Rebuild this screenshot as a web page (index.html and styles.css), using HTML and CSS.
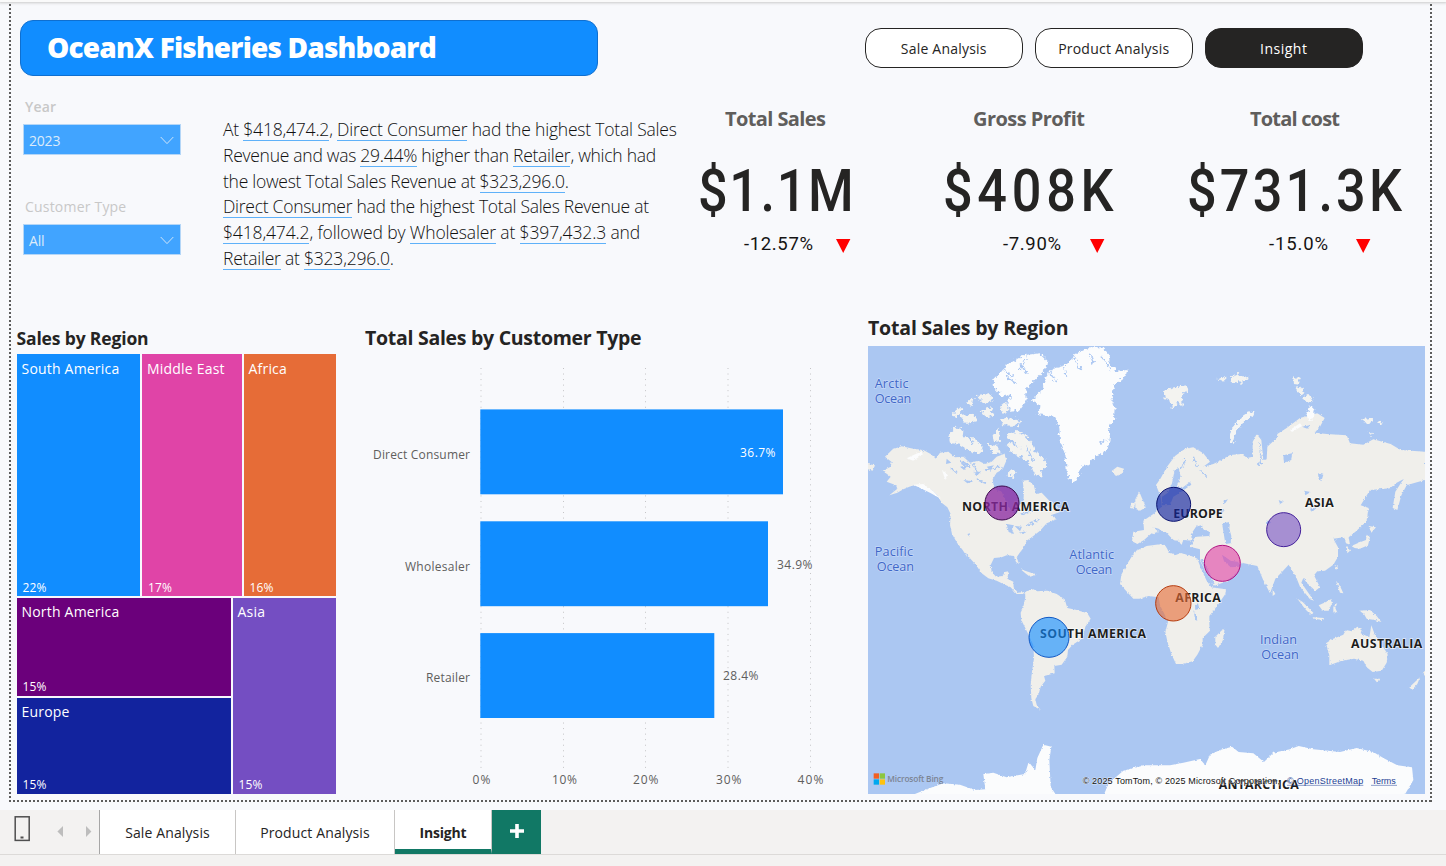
FILE: index.html
```html
<!DOCTYPE html>
<html lang="en">
<head>
<meta charset="utf-8">
<title>OceanX Fisheries Dashboard</title>
<link rel="stylesheet" href="styles.css">
</head>
<body>
<div class="app">
  <div class="ribbon-edge"></div>
  <main class="canvas">
    <header class="header">
      <h1 class="title">OceanX Fisheries Dashboard</h1>
      <nav class="pills">
        <a class="pill">Sale Analysis</a>
        <a class="pill">Product Analysis</a>
        <a class="pill pill-active">Insight</a>
      </nav>
    </header>

    <section class="summary">
      <div class="filters">
        <div class="filter">
          <div class="filter-label filter-label-strong">Year</div>
          <div class="select"><span>2023</span><svg width="14" height="9" viewBox="0 0 14 9"><path d="M.7 1 7 7.6 13.3 1" fill="none" stroke="#cfe4f8" stroke-width="1"/></svg></div>
        </div>
        <div class="filter">
          <div class="filter-label">Customer Type</div>
          <div class="select"><span>All</span><svg width="14" height="9" viewBox="0 0 14 9"><path d="M.7 1 7 7.6 13.3 1" fill="none" stroke="#cfe4f8" stroke-width="1"/></svg></div>
        </div>
      </div>
      <div class="narrative">
        <div class="l1">At <u>$418,474.2</u>, <u>Direct Consumer</u> had the highest Total Sales</div>
        <div class="l2">Revenue and was <u>29.44%</u> higher than <u>Retailer</u>, which had</div>
        <div class="l3">the lowest Total Sales Revenue at <u>$323,296.0</u>.</div>
        <div class="l4"><u>Direct Consumer</u> had the highest Total Sales Revenue at</div>
        <div class="l5"><u>$418,474.2</u>, followed by <u>Wholesaler</u> at <u>$397,432.3</u> and</div>
        <div class="l6"><u>Retailer</u> at <u>$323,296.0</u>.</div>
      </div>
      <svg class="kpis" width="740" height="170" viewBox="690 100 740 170">
        <g class="kpi-name">
          <text x="725" y="126" textLength="101">Total Sales</text>
          <text x="973" y="126" textLength="112">Gross Profit</text>
          <text x="1250" y="126" textLength="90">Total cost</text>
        </g>
        <g class="kpi-value">
          <text transform="translate(698 211) scale(.87 1)" textLength="179">$1.1M</text>
          <text transform="translate(943 211) scale(.87 1)" textLength="196">$408K</text>
          <text transform="translate(1187 211) scale(.87 1)" textLength="247">$731.3K</text>
        </g>
        <g class="kpi-delta">
          <text x="744" y="250" textLength="69">-12.57%</text>
          <text x="1003" y="250" textLength="58">-7.90%</text>
          <text x="1269" y="250" textLength="59">-15.0%</text>
        </g>
        <path d="M836 239h14.400l-7.200 14zM1090 239h14.400l-7.200 14zM1356 239h14.400l-7.200 14z" fill="#f00"/>
      </svg>
    </section>

    <section class="visuals">
      <div class="visual visual-tree">
        <h2 class="h-tree">Sales by Region</h2>
        <div class="treemap">
          <div class="tree-row tree-top">
            <div class="tile south"><span>South America</span><b>22%</b></div>
            <div class="tile middle"><span>Middle East</span><b>17%</b></div>
            <div class="tile africa"><span>Africa</span><b>16%</b></div>
          </div>
          <div class="tree-row tree-bottom">
            <div class="tree-col">
              <div class="tile north"><span>North America</span><b>15%</b></div>
              <div class="tile europe"><span>Europe</span><b>15%</b></div>
            </div>
            <div class="tile asia"><span>Asia</span><b>15%</b></div>
          </div>
        </div>
      </div>

      <div class="visual visual-bars">
        <h2 class="h-bars">Total Sales by Customer Type</h2>
        <svg class="bars" width="490" height="440" viewBox="350 354 490 440">
          <g stroke="#c4c4c6" stroke-width="1" stroke-dasharray="1 4.540">
            <path d="M481 368V770M563.500 368V770M645.500 368V770M728 368V770M810.500 368V770"/>
          </g>
          <g fill="#118dff">
            <rect x="480.300" y="409.400" width="302.700" height="84.900"/>
            <rect x="480.300" y="521.300" width="287.700" height="84.900"/>
            <rect x="480.300" y="633.100" width="234" height="84.900"/>
          </g>
          <g class="axis">
            <text x="373" y="459" textLength="97">Direct Consumer</text>
            <text x="405" y="571" textLength="65">Wholesaler</text>
            <text x="426" y="682" textLength="44">Retailer</text>
            <text x="740" y="457" textLength="35.500" class="inside">36.7%</text>
            <text x="777" y="569" textLength="35.500">34.9%</text>
            <text x="723" y="680" textLength="35.500">28.4%</text>
            <text x="472.500" y="784" textLength="18">0%</text>
            <text x="552" y="784" textLength="25">10%</text>
            <text x="633" y="784" textLength="25.500">20%</text>
            <text x="716" y="784" textLength="25.500">30%</text>
            <text x="797.500" y="784" textLength="26">40%</text>
          </g>
        </svg>
      </div>

      <div class="visual visual-map">
        <h2 class="h-map">Total Sales by Region</h2>
        <svg class="map" width="557" height="448" viewBox="24 108 1671 1344">
          <defs>
            <filter id="coast" x="-2%" y="-2%" width="104%" height="104%">
              <feTurbulence type="fractalNoise" baseFrequency="0.16" numOctaves="2" seed="4"/>
              <feDisplacementMap in="SourceGraphic" scale="8" xChannelSelector="R" yChannelSelector="G"/>
              <feGaussianBlur stdDeviation="1.1"/>
            </filter>
            <filter id="arctic" x="-2%" y="-2%" width="104%" height="104%">
              <feTurbulence type="fractalNoise" baseFrequency="0.1" numOctaves="2" seed="9"/>
              <feDisplacementMap in="SourceGraphic" scale="20" xChannelSelector="R" yChannelSelector="G"/>
              <feGaussianBlur stdDeviation="1.3"/>
            </filter>
          </defs>
          <rect x="24" y="108" width="1671" height="1344" fill="#abc7f2"/>

          <g fill="#f0efeb" filter="url(#coast)">
            <!-- North and Central America -->
            <path d="M75 440 98 418 125 409 160 416 190 420 212 432 228 446 240 428 265 425 285 442 310 440 330 458 355 452 375 462 395 455 410 440 432 432 440 450 428 478 410 488 398 508 402 535 425 545 440 580 455 605 470 612 476 592 490 575 492 545 488 512 505 510 522 528 528 552 545 548 568 572 592 590 600 606 572 616 590 628 560 640 540 662 520 678 500 692 492 712 478 730 470 742 477 762 468 756 462 738 440 736 425 742 402 744 392 765 395 785 408 800 428 798 434 786 446 784 442 806 460 815 461 832 474 848 498 845 492 852 470 852 452 832 430 822 410 812 385 805 365 790 348 765 330 745 318 728 322 742 308 720 292 700 276 672 270 645 272 612 262 592 245 578 232 556 215 540 195 535 165 525 148 530 130 538 112 548 88 556 112 536 108 526 80 515 92 500 68 482 92 470 95 456Z"/>
            <path d="M24 462 45 466 38 482 24 478Z"/>
            <!-- South America -->
            <path d="M495 845 520 838 532 844 562 842 590 852 614 868 622 894 650 900 682 910 692 926 676 950 668 985 638 1004 624 1020 622 1040 605 1064 583 1068 584 1090 552 1098 556 1112 542 1130 536 1152 526 1168 530 1184 542 1200 520 1188 514 1165 512 1125 516 1085 522 1045 520 1005 506 975 484 930 482 908 490 890 496 862Z"/>
            <!-- Africa -->
            <path d="M825 724 860 708 905 702 922 706 924 722 945 736 965 728 1000 740 1012 746 1024 778 1040 812 1054 832 1098 838 1096 852 1074 884 1048 918 1048 942 1050 962 1028 984 1028 1004 1012 1034 998 1054 966 1062 948 1062 934 1032 922 994 916 966 924 936 912 910 900 886 896 862 866 858 838 866 820 866 796 840 780 822 784 794 800 764Z"/>
            <path d="M1066 980 1084 962 1094 956 1088 992 1074 1014 1066 1004Z"/>
            <!-- Europe and Asia -->
            <path d="M888 525 902 505 920 472 945 438 975 416 1000 412 1030 430 1050 455 1030 470 1060 462 1080 452 1110 435 1145 432 1162 444 1178 440 1178 396 1190 372 1204 390 1210 450 1220 448 1222 410 1250 384 1252 372 1280 354 1320 324 1350 316 1372 310 1394 324 1380 350 1364 368 1400 372 1460 376 1470 400 1510 404 1540 388 1592 402 1622 420 1695 425 1695 510 1660 520 1640 526 1624 556 1612 600 1598 594 1606 545 1630 508 1610 518 1590 535 1530 540 1502 586 1526 594 1520 634 1488 664 1466 682 1470 704 1458 700 1452 682 1420 686 1434 712 1434 740 1420 764 1395 782 1372 784 1362 796 1380 832 1366 842 1340 818 1330 804 1324 818 1350 856 1362 872 1350 868 1320 830 1308 800 1286 764 1268 784 1246 806 1230 850 1208 806 1192 768 1145 758 1132 786 1100 814 1062 828 1040 790 1020 752 1020 718 990 710 1002 692 970 690 965 704 940 690 915 664 900 664 930 690 920 700 895 680 875 670 852 690 832 702 816 694 820 665 852 660 850 632 880 612 905 590 902 560Z"/>
            <!-- Australia and islands -->
            <path d="M1398 1000 1416 988 1450 974 1458 960 1475 964 1492 950 1506 956 1502 970 1528 982 1534 946 1545 975 1562 1000 1583 1032 1580 1058 1565 1082 1538 1086 1520 1072 1510 1052 1482 1046 1445 1052 1408 1066 1408 1036Z"/>
            <path d="M1542 1106 1558 1106 1552 1118ZM1648 1132 1680 1102 1672 1122 1656 1140ZM1688 1090 1695 1082V1098ZM1312 866 1328 876 1360 908 1354 916 1336 898ZM1376 886 1398 876 1412 868 1416 880 1406 902 1388 902ZM1358 922 1392 924 1390 930 1360 926ZM1498 902 1530 900 1550 918 1564 936 1544 930 1520 926 1512 912ZM1420 890 1432 878 1426 894 1432 908 1420 906ZM1428 812 1440 828 1450 850 1440 848ZM1238 838 1246 852 1238 858ZM1460 706 1470 722 1462 730ZM1474 708 1496 698 1518 690 1520 674 1530 682 1524 706 1500 716 1484 714ZM1526 648 1548 652 1534 668ZM1424 765 1434 770 1428 780Z"/>
            <path d="M754 484 772 470 792 476 788 490 768 498ZM826 568 838 545 846 565 858 592 840 602 826 596ZM814 578 826 580 820 596 810 594ZM482 778 504 785 530 794 510 800 496 790Z"/>
          </g>

          <!-- Arctic archipelago -->
          <g fill="#f3f3f0" filter="url(#arctic)">
            <path d="M265 376 290 350 310 362 308 382 340 382 368 410 362 432 330 424 300 404 270 398ZM275 312 300 290 310 300 290 322ZM300 318 340 314 356 332 320 342ZM318 276 340 264 334 292ZM352 258 390 252 398 268 374 282ZM362 300 392 292 402 314 378 324ZM420 328 450 322 480 334 474 348 430 346ZM398 376 416 356 420 392 402 398ZM386 402 410 404 422 430 398 434ZM440 372 470 362 498 378 516 402 530 430 558 454 562 472 540 480 545 500 524 492 510 462 484 440 462 434 440 408 455 392ZM420 290 438 276 446 302 428 312ZM448 480 468 482 462 504 446 500Z"/>
            <path d="M912 240 945 232 980 226 988 240 966 252 968 290 954 276 936 300 932 274 914 264ZM1072 208 1100 200 1092 216ZM1110 202 1130 192 1166 204 1150 218 1116 216ZM1300 198 1318 206 1318 224 1302 222ZM1304 230 1320 228 1334 246 1322 256ZM1330 262 1350 252 1358 272 1338 276ZM1506 326 1542 324 1534 342 1514 340ZM1554 334 1570 338 1558 344ZM1524 362 1540 368 1532 378Z"/>
          </g>
          <path d="M1112 400 1120 364 1148 328 1182 306" fill="none" stroke="#f4f5f4" stroke-width="14" filter="url(#arctic)"/>

          <!-- Ice sheets -->
          <g fill="#fbfcfd" filter="url(#arctic)">
            <path d="M515 270 545 244 558 202 576 178 622 164 640 136 690 112 726 112 750 140 746 158 770 186 802 180 796 200 764 224 754 264 764 294 762 330 744 352 750 380 742 422 706 436 688 462 662 472 652 510 636 518 620 482 616 430 600 392 598 350 582 320 530 312 545 290Z"/>
            <path d="M400 210 420 190 440 166 490 136 540 130 566 156 548 186 520 214 498 240 500 272 480 300 450 302 442 278 456 252 426 260 404 236Z"/>
            <path d="M1340 310 1350 286 1364 300 1362 328 1344 332Z"/>
          </g>
          <g fill="#fbfcfd" filter="url(#coast)">
            <path d="M150 1458 200 1438 250 1420 300 1424 345 1440 376 1438 370 1392 400 1388 440 1402 495 1392 506 1356 526 1380 532 1344 550 1304 574 1310 568 1350 572 1430 590 1458Z"/>
            <path d="M730 1458 746 1420 790 1382 850 1366 930 1366 970 1358 1020 1347 1036 1366 1050 1334 1080 1320 1116 1310 1136 1326 1180 1330 1212 1356 1240 1328 1290 1318 1316 1308 1360 1318 1440 1326 1490 1314 1540 1326 1570 1344 1612 1366 1656 1372 1660 1410 1632 1458Z"/>
            <path d="M140 445 180 426 190 432 160 452ZM160 524 190 522 220 544 242 566 210 548ZM246 480 262 492 256 510Z"/>
            <path d="M1290 360 1320 340 1326 348 1296 366Z"/>
          </g>
          <path d="M640 140 662 180M690 130 700 160M726 140 752 180M610 170 620 200M570 190 590 216M736 390 718 400M430 180 460 200M480 160 500 190" stroke="#abc7f2" stroke-width="4" fill="none" filter="url(#arctic)"/>

          <!-- Inland waters -->
          <g fill="#abc7f2" filter="url(#coast)">
            <path d="M944 480 956 474 962 500 950 530 966 534 990 516 994 524 960 548 940 560 930 585 905 586 906 560 924 548 936 520Z"/>
            <path d="M960 700 1000 692 992 674 1008 650 1028 644 1026 656 1050 666 1048 678 1010 680 992 692ZM1086 640 1110 636 1108 656 1114 678 1112 700 1096 702 1092 676Z"/>
            <path d="M860 696 884 668 914 664 932 690 956 692 970 714 1008 716 1004 740 960 728 930 730 914 704ZM880 652 896 656 920 674 944 692 936 702 908 676Z"/>
            <path d="M440 642 462 646 456 656 462 672 446 666ZM464 648 486 650 480 664ZM476 668 500 664 490 672ZM380 470 402 466 390 480ZM340 488 364 484 350 498ZM300 470 324 466 312 480ZM322 672 330 670 328 680ZM260 446 274 458 258 462ZM310 510 340 514 322 520Z"/>
            <path d="M1270 436 1296 430 1294 450 1272 458ZM1374 490 1390 494 1384 514 1376 506ZM1332 542 1352 546 1336 556ZM1090 572 1104 568 1094 582ZM1080 602 1094 600 1086 610ZM1256 570 1270 576 1260 582ZM1220 630 1234 636 1222 644ZM1326 350 1350 346 1342 356ZM1350 596 1372 592 1356 606ZM1190 462 1200 454 1196 468Z"/>
            <path d="M1018 745 1030 750 1064 822 1056 820ZM1086 734 1112 752 1138 756 1140 770 1112 772 1092 754ZM1005 886 1014 880 1018 896 1006 900ZM1000 900 1006 930 1012 932 1006 910Z"/>
          </g>
          <g stroke="#abc7f2" stroke-width="5" fill="none" filter="url(#arctic)">
            <path d="M300 452 330 470M340 460 350 490M372 480 420 470M350 510 378 520M400 512 436 506M270 470 292 490M410 540 440 524M480 614 520 600M500 646 540 630M975 450 964 478M1000 440 1010 470M1020 480 1040 500M1200 400 1204 460M320 370 340 400M450 390 480 416M500 410 520 450M500 140 480 180M438 200 470 220"/>
          </g>

          <g class="continent">
            <text x="306" y="602" textLength="322">NORTH AMERICA</text>
            <text x="940" y="624" textLength="148">EUROPE</text>
            <text x="1335" y="590" textLength="86">ASIA</text>
            <text x="946" y="877" textLength="136">AFRICA</text>
            <text x="540" y="984" textLength="318">SOUTH AMERICA</text>
            <text x="1473" y="1013" textLength="214">AUSTRALIA</text>
            <text x="1076" y="1438" textLength="240">ANTARCTICA</text>
          </g>
          <g class="ocean">
            <text x="44" y="235" textLength="102">Arctic</text>
            <text x="44" y="280" textLength="110">Ocean</text>
            <text x="44" y="738" textLength="115">Pacific</text>
            <text x="50" y="782" textLength="112">Ocean</text>
            <text x="628" y="747" textLength="134">Atlantic</text>
            <text x="647" y="792" textLength="110">Ocean</text>
            <text x="1200" y="1003" textLength="111">Indian</text>
            <text x="1204" y="1048" textLength="112">Ocean</text>
          </g>
          <g stroke-width="3">
            <circle cx="426" cy="579" r="51" fill="#8a27a1" fill-opacity=".76" stroke="#3c0a4d"/>
            <circle cx="941" cy="583" r="51" fill="#12239e" fill-opacity=".65" stroke="#0b1470"/>
            <circle cx="1271" cy="659" r="51" fill="#744ec2" fill-opacity=".6" stroke="#44219b"/>
            <circle cx="1087" cy="760" r="54" fill="#e044a7" fill-opacity=".62" stroke="#b01482"/>
            <circle cx="940" cy="880" r="53" fill="#e66c37" fill-opacity=".62" stroke="#b53a0d"/>
            <circle cx="567" cy="982" r="60" fill="#118dff" fill-opacity=".62" stroke="#1259c4"/>
          </g>
          <path d="M41 1390h16v16H41z" fill="#f25f22"/><path d="M59 1390h16v16H59z" fill="#8cc63f"/><path d="M41 1408h16v16H41z" fill="#00a8f0"/><path d="M59 1408h16v16H59z" fill="#ffc20e"/>
          <text class="bing" x="82" y="1416" textLength="168">Microsoft Bing</text>
          <g class="credit">
            <text x="668" y="1421" textLength="592">© 2025 TomTom, © 2025 Microsoft Corporation,</text>
            <text class="link" x="1281" y="1421" textLength="229">© OpenStreetMap</text>
            <text class="link" x="1535" y="1421" textLength="72">Terms</text>
            <path d="M1281 1426H1510M1533 1426H1611" stroke="#1c3f94" stroke-width="2.500"/>
          </g>
        </svg>
      </div>
    </section>
  </main>

  <footer class="tabbar">
    <div class="tab-tools">
      <svg width="100" height="44" viewBox="0 0 100 44">
        <rect x="15.200" y="6.800" width="14" height="23.600" fill="none" stroke="#4f4f4f" stroke-width="1.500"/>
        <path d="M20.500 26.500h3v2h-3z" fill="#4f4f4f"/>
        <path d="M63 16v11l-5.600-5.500z" fill="#bdbdbd"/><path d="M86 16v11l5.400-5.500z" fill="#bdbdbd"/>
      </svg>
    </div>
    <div class="tab tab-1">Sale Analysis</div>
    <div class="tab tab-2">Product Analysis</div>
    <div class="tab tab-3">Insight</div>
    <div class="tab-add"><svg width="14" height="14" viewBox="0 0 14 14"><path d="M7 0v14M0 7h14" stroke="#fff" stroke-width="3.600"/></svg></div>
  </footer>
  <div class="status"></div>
</div>
</body>
</html>
```
FILE: styles.css
```css
* { box-sizing: border-box; }
body { margin: 0; width: 1446px; height: 866px; overflow: hidden; background: #f8f9fc; color: #252423; font-family: "Open Sans", "Noto Sans", sans-serif; }
h1, h2 { margin: 0; }
.app { display: flex; flex-direction: column; height: 866px; }
.ribbon-edge { height: 2px; flex: none; background: #fafafa; box-shadow: 0 0 3px 1px #c9c9c9; }

.canvas {
  height: 800px; margin: 0 14px 8px 9px; padding: 0 2px; flex: none;
  background:
    repeating-linear-gradient(#5c5c5c 0 2px, transparent 2px 4px) 0 2px / 2px 798px no-repeat,
    repeating-linear-gradient(#5c5c5c 0 2px, transparent 2px 4px) 100% 2px / 2px 798px no-repeat,
    repeating-linear-gradient(90deg, #5c5c5c 0 2px, transparent 2px 4px) 0 100% / 100% 2px no-repeat;
}

.header { display: flex; justify-content: space-between; height: 74px; padding: 18px 67px 0 9px; }
.title { width: 578px; height: 56px; padding-left: 26px; border: 1px solid #0f6fd0; border-radius: 13px; background: #118dff; color: #fff; font-size: 28px; font-weight: 800; line-height: 52px; letter-spacing: -.82px; white-space: nowrap; }
.pills { display: flex; gap: 11.500px; padding-top: 8px; }
.pill { width: 158.500px; height: 40px; border: 1px solid #252423; border-radius: 16px; background: #fff; font-size: 14px; line-height: 39px; text-align: center; letter-spacing: .22px; }
.pill-active { background: #252423; color: #fff; letter-spacing: .5px; }

.summary { display: flex; height: 251px; }
.filters { width: 212px; padding: 20px 0 0 12px; }
.filter { height: 100px; }
.filter-label { padding-left: 2px; height: 28px; color: #c8c8c8; font-size: 14px; line-height: 21px; letter-spacing: .2px; }
.filter-label-strong { font-weight: 600; }
.select { display: flex; align-items: center; justify-content: space-between; width: 158px; height: 31px; padding: 1px 6px 0 5px; border: 1px solid #b4d6f7; background: #41a4ff; color: #dcebfa; font-size: 14px; letter-spacing: -.2px; }
.narrative { width: 467px; padding-top: 41px; color: #111; font-size: 17.500px; font-weight: 300; line-height: 25.800px; white-space: nowrap; }
.narrative u { display: inline-block; height: 24px; line-height: 25.800px; vertical-align: top; text-decoration: none; border-bottom: 1.500px solid #5fb1f9; }
.l1 { letter-spacing: -.2px; }
.l2, .l3, .l4 { letter-spacing: -.27px; }
.l5 { letter-spacing: -.14px; }
.l6 { letter-spacing: -.22px; }
.kpis { margin-top: 24px; flex: none; }
.kpi-name { font-size: 20px; font-weight: 700; fill: #605e5c; }
.kpi-value { font-family: Roboto, sans-serif; font-size: 60px; font-weight: 500; fill: #252423; }
.kpi-delta { font-family: Roboto, sans-serif; font-size: 18.500px; fill: #151413; }

.visuals { display: flex; height: 473px; }
h2 { font-weight: 700; white-space: nowrap; }
.visual-tree { width: 339px; padding-left: 5.500px; }
.h-tree { height: 27px; line-height: 22px; font-size: 17.500px; letter-spacing: -.15px; }
.treemap { width: 319.500px; height: 441px; display: flex; flex-direction: column; gap: 2px; }
.tree-row { display: flex; gap: 2px; }
.tree-top { height: 242px; }
.tree-bottom { height: 196px; }
.tree-col { display: flex; flex-direction: column; gap: 2px; width: 214px; }
.tile { display: flex; flex-direction: column; justify-content: space-between; padding: 4px 5px 1px; color: #fff; font-size: 14px; line-height: 21px; letter-spacing: .2px; }
.tree-top .tile { padding-bottom: 0; }
.tree-bottom .tile { padding-top: 3px; }
.tile b { padding-left: 1px; font-size: 12px; font-weight: 400; line-height: 16px; }
.south { width: 123.500px; background: #118dff; }
.middle { width: 99.500px; background: #e044a7; }
.africa { width: 92.500px; background: #e66c37; }
.north { height: 97.500px; background: #6b007b; }
.europe { height: 96.500px; background: #12239e; }
.asia { width: 103.500px; background: #744ec2; }

.visual-bars { width: 518px; }
.h-bars { height: 27px; padding-left: 15px; line-height: 21px; font-size: 19.500px; letter-spacing: -.28px; }
.bars { display: block; }
.axis { font-size: 12px; fill: #605e5c; }
.inside { fill: #fff; }
.visual-map { width: 557px; }
.h-map { height: 19px; line-height: 1px; font-size: 19.500px; letter-spacing: -.18px; }
.map { display: block; }
.continent { font-size: 37px; font-weight: 700; fill: #1d1d1d; stroke: #fff; stroke-opacity: .7; stroke-width: 4px; paint-order: stroke; }
.ocean { font-size: 38px; fill: #3f67c8; stroke: #c5d8f7; stroke-width: 4px; paint-order: stroke; }
.bing { font-size: 25px; font-weight: 600; fill: #7c8494; }
.credit { font-family: "Liberation Sans", Arial, sans-serif; font-size: 27px; fill: #111; stroke: #fff; stroke-opacity: .6; stroke-width: 3px; paint-order: stroke; }
.credit .link { fill: #1c3f94; }

.tabbar { display: flex; height: 44px; flex: none; background: #f3f2f1; }
.tab-tools { width: 100px; border-right: 1px solid #a6a6a6; }
.tab { border-right: 1px solid #c8c6c4; background: #fff; color: #252423; font-size: 14px; line-height: 45px; text-align: center; letter-spacing: .12px; white-space: nowrap; }
.tab-1 { width: 136px; }
.tab-2 { width: 159px; }
.tab-3 { width: 97px; border-bottom: 5px solid #117865; font-weight: 700; letter-spacing: -.2px; }
.tab-add { display: flex; align-items: center; justify-content: center; width: 49px; padding-bottom: 3px; background: #117865; }
.status { height: 12px; border-top: 1px solid #dcdad8; background: #f3f2f1; }
```
